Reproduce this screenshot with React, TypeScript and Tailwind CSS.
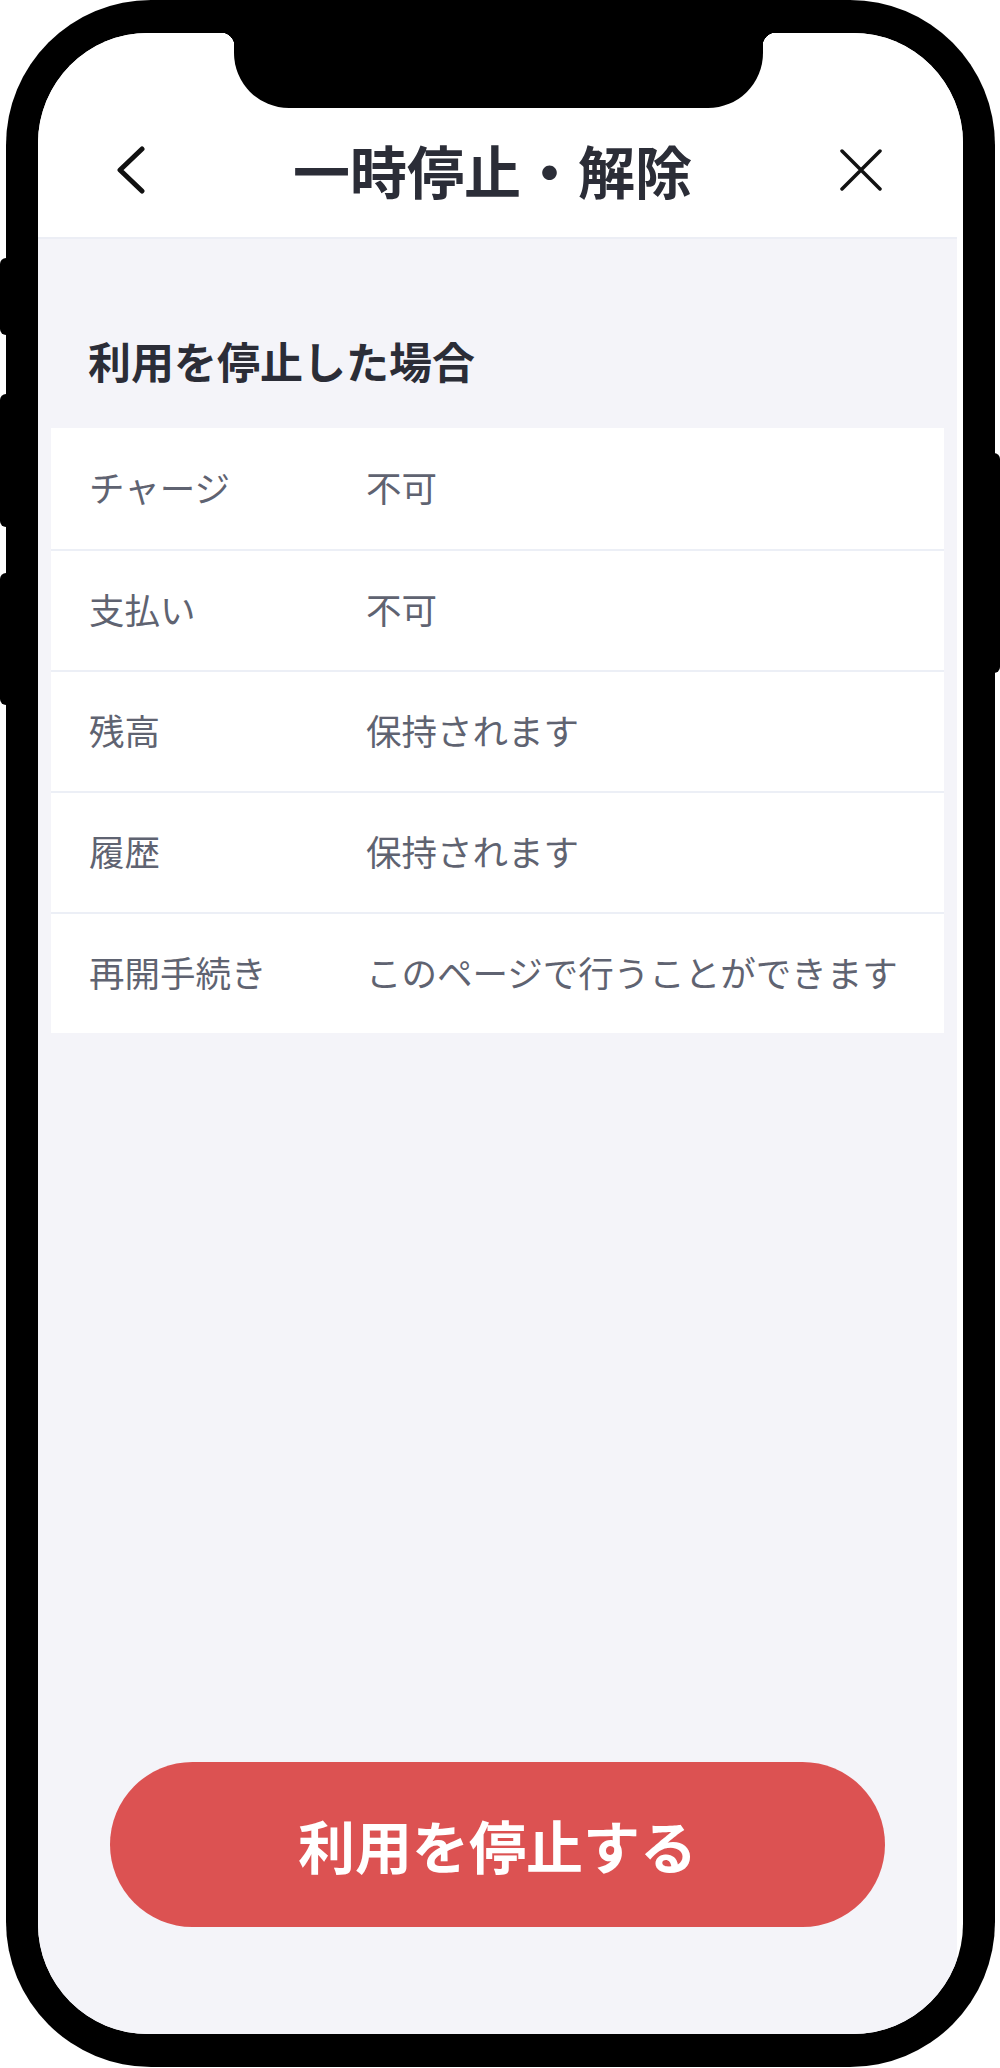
import React from "react";

const rows = [
  { label: "チャージ", value: "不可" },
  { label: "支払い", value: "不可" },
  { label: "残高", value: "保持されます" },
  { label: "履歴", value: "保持されます" },
  { label: "再開手続き", value: "このページで行うことができます" },
];

const font = "font-['Noto_Sans_CJK_JP','Noto_Sans',sans-serif]";

const App = () => {
  return (
    <div className={`relative w-[1000px] h-[2068px] bg-white ${font}`}>
      {/* side buttons */}
      <div className="absolute left-0 top-[258px] w-[8px] h-[77px] bg-black rounded-l-[6px]" />
      <div className="absolute left-0 top-[394px] w-[8px] h-[133px] bg-black rounded-l-[6px]" />
      <div className="absolute left-0 top-[573px] w-[8px] h-[132px] bg-black rounded-l-[6px]" />
      <div className="absolute right-0 top-[453px] w-[8px] h-[220px] bg-black rounded-r-[6px]" />

      {/* phone frame */}
      <div className="ml-[6px] w-[989px] h-[2067px] bg-black rounded-[145px] pt-[33px] pb-[33px] pl-[32px] pr-[32px]">
        <div className="relative h-full bg-white rounded-[110px] overflow-hidden flex flex-col">
          {/* notch */}
          <div className="absolute left-[196px] top-0 w-[529px] h-[75px] bg-black rounded-b-[55px]" />
          <div className="absolute left-[183px] top-0 w-[13px] h-[13px] bg-[radial-gradient(circle_at_0_100%,transparent_13px,black_13.5px)]" />
          <div className="absolute left-[725px] top-0 w-[13px] h-[13px] bg-[radial-gradient(circle_at_100%_100%,transparent_13px,black_13.5px)]" />

          {/* header */}
          <header className="pt-[69px] bg-white">
            <div className="h-[135px] flex items-center">
              <button className="ml-[79px] w-[28px] h-[48px] flex items-center justify-center">
                <svg width="28" height="48" viewBox="0 0 28 48" fill="none">
                  <polyline
                    points="25,3 3,24 25,45"
                    stroke="#111"
                    strokeWidth="5"
                    strokeLinecap="round"
                    strokeLinejoin="round"
                  />
                </svg>
              </button>
              <h1 className="flex-1 text-center text-[57px] leading-none font-bold text-[#2b2d37]">
                一時停止・解除
              </h1>
              <button className="mr-[81px] w-[42px] h-[42px] flex items-center justify-center">
                <svg width="42" height="42" viewBox="0 0 42 42" fill="none">
                  <path
                    d="M2 2L40 40M40 2L2 40"
                    stroke="#111"
                    strokeWidth="3.5"
                    strokeLinecap="round"
                  />
                </svg>
              </button>
            </div>
          </header>

          {/* content */}
          <main className="flex-1 mr-[6px] bg-[#f4f4f9] border-t-2 border-[#eceef5] flex flex-col">
            <h2 className="mt-[100px] pl-[50px] text-[43px] leading-none font-bold text-[#2b2d37]">
              利用を停止した場合
            </h2>

            <div className="mt-[46px] mx-[13px] bg-white">
              {rows.map((row, i) => (
                <div
                  key={row.label}
                  className={`h-[121px] flex items-center pl-[38px] pb-[3px] text-[35.5px] text-[#5f6371] ${
                    i > 0 ? "border-t-2 border-[#eceff6]" : ""
                  }`}
                >
                  <span className="w-[277px] shrink-0">{row.label}</span>
                  <span className="whitespace-nowrap">{row.value}</span>
                </div>
              ))}
            </div>

            <div className="mt-auto mb-[107px] mx-[72px]">
              <button className="w-full h-[165px] rounded-full bg-[#dc5252] text-white text-[57px] font-bold leading-none">
                利用を停止する
              </button>
            </div>
          </main>
        </div>
      </div>
    </div>
  );
};

export default App;
